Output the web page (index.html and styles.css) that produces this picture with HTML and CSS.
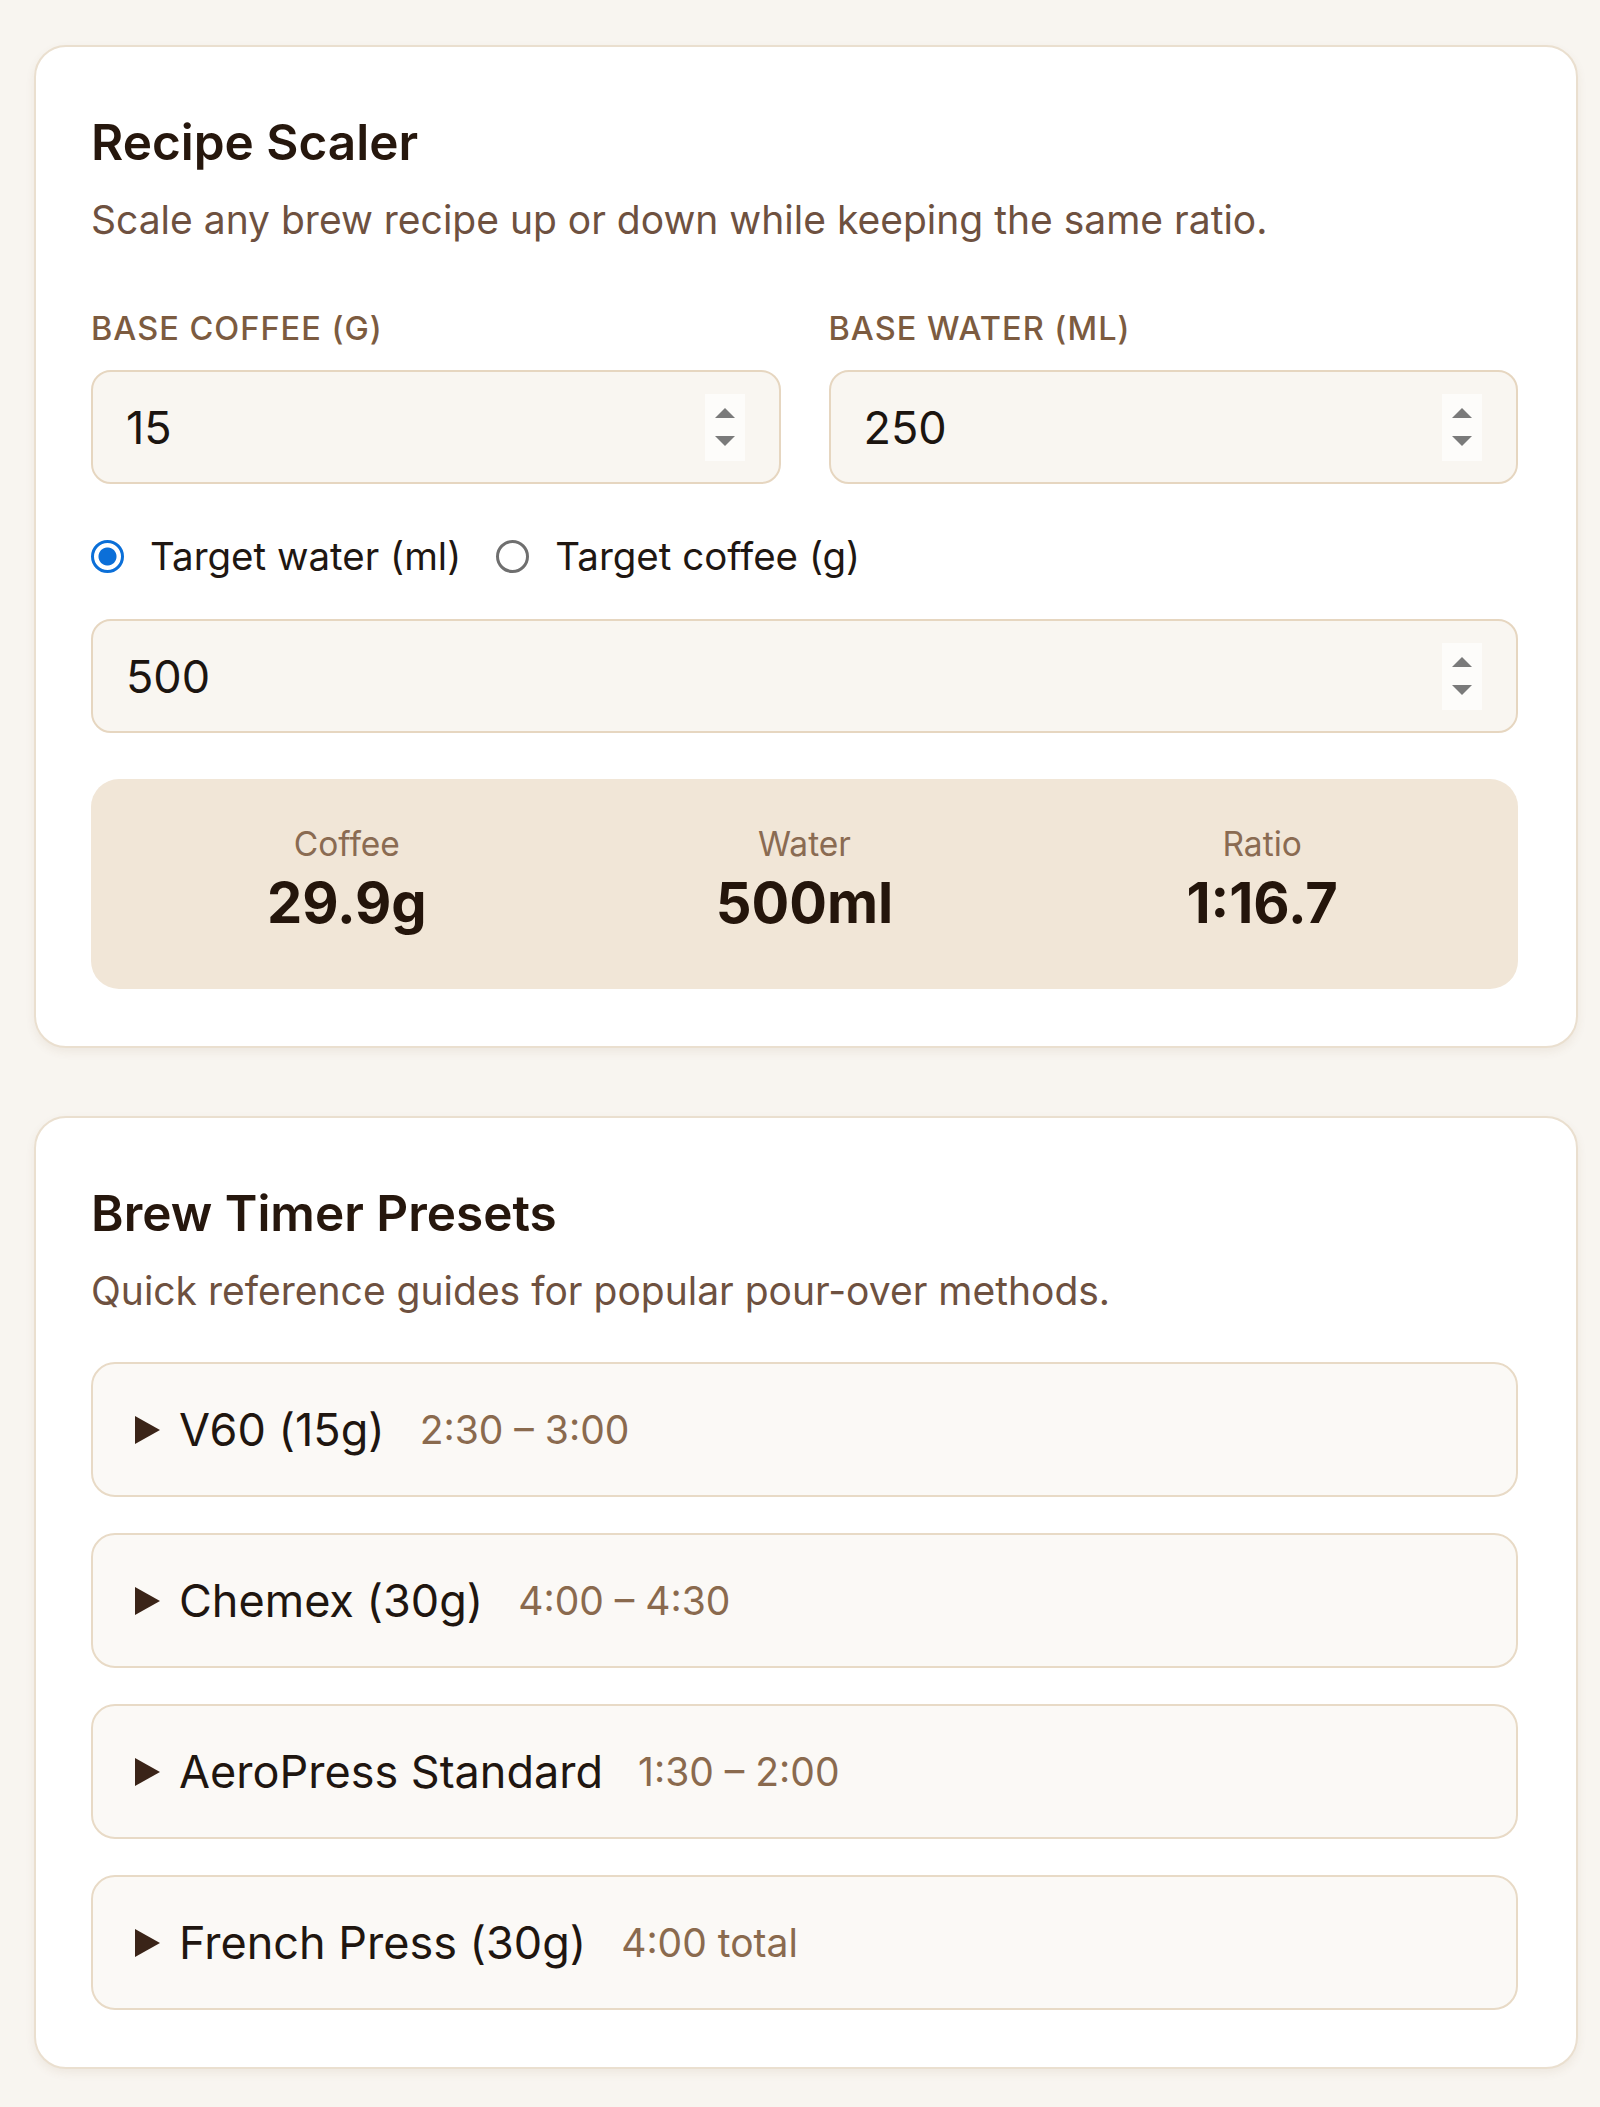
FILE: index.html
```html
<!DOCTYPE html>
<html lang="en">

<head>
    <meta charset="UTF-8">
    <meta name="viewport" content="width=device-width, initial-scale=1.0">
    <title>Brew Tools</title>
    <link rel="stylesheet" href="styles.css">
</head>

<body>
    <main class="page">
        <section class="card">
            <h2 class="card-title">Recipe Scaler</h2>
            <p class="card-desc">Scale any brew recipe up or down while keeping the same ratio.</p>

            <div class="base-grid">
                <div class="field">
                    <label class="field-label" for="base-coffee">Base coffee (g)</label>
                    <div class="num-input">
                        <input type="number" id="base-coffee" value="15">
                        <span class="stepper"><i class="up"></i><i class="down"></i></span>
                    </div>
                </div>
                <div class="field">
                    <label class="field-label" for="base-water">Base water (ml)</label>
                    <div class="num-input">
                        <input type="number" id="base-water" value="250">
                        <span class="stepper"><i class="up"></i><i class="down"></i></span>
                    </div>
                </div>
            </div>

            <div class="mode-row">
                <label class="radio"><input type="radio" name="mode" value="water" checked> Target water (ml)</label>
                <label class="radio"><input type="radio" name="mode" value="coffee"> Target coffee (g)</label>
            </div>

            <div class="num-input">
                <input type="number" id="target" value="500">
                <span class="stepper"><i class="up"></i><i class="down"></i></span>
            </div>

            <div class="results">
                <div class="result">
                    <span class="result-label">Coffee</span>
                    <span class="result-value" id="out-coffee">29.9g</span>
                </div>
                <div class="result">
                    <span class="result-label">Water</span>
                    <span class="result-value" id="out-water">500ml</span>
                </div>
                <div class="result">
                    <span class="result-label">Ratio</span>
                    <span class="result-value" id="out-ratio">1:16.7</span>
                </div>
            </div>
        </section>

        <section class="card">
            <h2 class="card-title">Brew Timer Presets</h2>
            <p class="card-desc">Quick reference guides for popular pour-over methods.</p>

            <div class="presets">
                <details class="preset">
                    <summary><span class="caret"></span><span class="preset-name">V60 (15g)</span><span class="preset-time">2:30 – 3:00</span></summary>
                </details>
                <details class="preset">
                    <summary><span class="caret"></span><span class="preset-name">Chemex (30g)</span><span class="preset-time">4:00 – 4:30</span></summary>
                </details>
                <details class="preset">
                    <summary><span class="caret"></span><span class="preset-name">AeroPress Standard</span><span class="preset-time">1:30 – 2:00</span></summary>
                </details>
                <details class="preset">
                    <summary><span class="caret"></span><span class="preset-name">French Press (30g)</span><span class="preset-time">4:00 total</span></summary>
                </details>
            </div>
        </section>
    </main>
</body>

</html>
```

FILE: styles.css
```css
body {
    margin: 0;
    background-color: #f8f5f0;
    font-family: Inter, "Noto Sans", sans-serif;
    color: #241912;
}

.page {
    padding: 45px 22px 38px 34px;
    display: flex;
    flex-direction: column;
    gap: 68px;
}

.card {
    background-color: #fff;
    border: 2px solid #eadfcf;
    border-radius: 32px;
    padding: 66px 58px 57px 55px;
    box-shadow: 0 4px 10px rgba(110, 80, 40, 0.08);
}

.card-title {
    margin: 0;
    font-size: 49.5px;
    line-height: 58px;
    font-weight: 600;
    color: #26170d;
}

.card-desc {
    margin: 23px 0 0;
    font-size: 39px;
    line-height: 51px;
    color: #6e5140;
}

.base-grid {
    margin-top: 66px;
    display: grid;
    grid-template-columns: minmax(0, 1fr) minmax(0, 1fr);
    gap: 48px;
}

.field-label {
    display: block;
    margin-bottom: 23px;
    font-size: 32.5px;
    line-height: 36px;
    font-weight: 500;
    letter-spacing: 1px;
    text-transform: uppercase;
    color: #7c5b40;
}

.num-input {
    display: flex;
    align-items: center;
    height: 114px;
    box-sizing: border-box;
    padding: 0 34px 0 33px;
    background-color: #f9f6f1;
    border: 2px solid #e6d6c0;
    border-radius: 20px;
}

.num-input input {
    flex: 1;
    width: 0;
    min-width: 0;
    border: none;
    background: transparent;
    font-family: inherit;
    font-size: 45px;
    color: #1c1510;
    padding: 0;
    outline: none;
    -moz-appearance: textfield;
}

.num-input input::-webkit-inner-spin-button,
.num-input input::-webkit-outer-spin-button {
    -webkit-appearance: none;
    margin: 0;
}

.stepper {
    width: 40px;
    height: 67px;
    background-color: #fdfcfa;
    display: flex;
    flex-direction: column;
    align-items: center;
    justify-content: center;
    gap: 18px;
}

.stepper i {
    width: 0;
    height: 0;
    border-left: 10px solid transparent;
    border-right: 10px solid transparent;
}

.stepper .up {
    border-bottom: 10px solid #7a7a7a;
}

.stepper .down {
    border-top: 10px solid #7a7a7a;
}

.mode-row {
    margin: 51px 0 42px;
    display: flex;
    align-items: center;
    gap: 35px;
}

.radio {
    display: flex;
    align-items: center;
    gap: 26px;
    font-size: 38.5px;
    line-height: 42px;
    color: #1f1712;
}

.radio input {
    -webkit-appearance: none;
    appearance: none;
    margin: 0;
    width: 33px;
    height: 33px;
    border: 3px solid #6f6f6f;
    border-radius: 50%;
    background-color: #fff;
    box-sizing: border-box;
}

.radio input:checked {
    border-color: #0b6fd8;
    background: radial-gradient(circle, #0b6fd8 0 8.5px, #fff 9.5px);
}

.results {
    margin-top: 46px;
    display: grid;
    grid-template-columns: repeat(3, 1fr);
    padding: 47px 27px 51px;
    background-color: #f1e6d7;
    border-radius: 28px;
}

.result {
    display: flex;
    flex-direction: column;
    align-items: center;
    gap: 6px;
}

.result-label {
    font-size: 33.5px;
    line-height: 36px;
    color: #8a6b52;
}

.result-value {
    font-size: 56px;
    line-height: 70px;
    font-weight: 700;
    color: #24150b;
}

.presets {
    margin-top: 46px;
    display: flex;
    flex-direction: column;
    gap: 36px;
}

.preset {
    background-color: #fbf9f6;
    border: 2px solid #e8dac6;
    border-radius: 24px;
}

.preset summary {
    list-style: none;
    display: flex;
    align-items: center;
    height: 131px;
    padding: 0 42px;
    cursor: pointer;
}

.preset summary::-webkit-details-marker {
    display: none;
}

.caret {
    width: 0;
    height: 0;
    border-top: 14px solid transparent;
    border-bottom: 14px solid transparent;
    border-left: 25px solid #3a2418;
    margin-right: 19px;
}

.preset-name {
    font-size: 45px;
    color: #1f1610;
}

.preset-time {
    margin-left: 35px;
    font-size: 39px;
    color: #8a6a4e;
}
```
